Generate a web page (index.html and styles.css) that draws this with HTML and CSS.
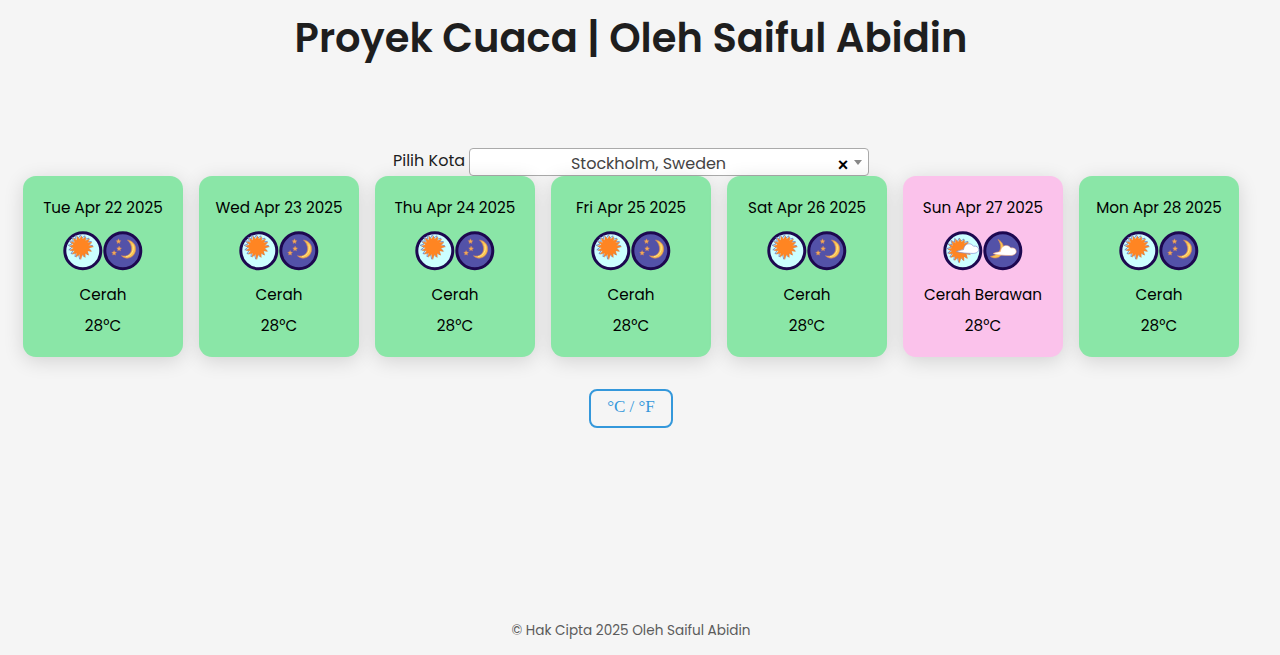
FILE: index.html
```html
<!DOCTYPE html>
<html lang="id">
<head>
<meta charset="utf-8">
<title>Proyek Cuaca</title>
<link rel="stylesheet" href="styles.css">
</head>
<body>
<svg class="sprite" aria-hidden="true">
  <defs>
    <path id="rays" d="M13 .2 7.9 1.6 11 5 6.7 4.4 8 9 4.4 6.7 4.4 11.3 1.6 8-.2 13.4-1.7 8-5 11-4.6 6.6-9 8-6.7 4.2-11.2 4-7.8 1.4-11.8-.5-7.9-1.8-10.8-5-6.6-4.4-8-8.6-4.4-6.6-4.2-10.6-1.4-7.8.4-11 1.8-7.8 5-10 4.6-6.4 9-7.6 6.8-4.2 11.4-4.2 7.9-1.5Z"/>
    <path id="cloud" d="M0 8.6C2.4 7.2 4.5 7.2 7 6.6 7.6 2.6 10 .6 13 .8 14.8.9 16 2 17 3.2 20 2.6 22.2 4.2 22.2 6.6 22 9.4 19 10.6 15.5 10.4 10 10.3 5 10 0 8.6Z"/>
    <path id="star" d="M0-2.4.8-.8 2.5-.5 1.2.8 1.4 2.4 0 1.6-1.5 2.3-1.2.7-2.4-.5-.8-.8Z"/>
  </defs>
  <symbol id="day" viewBox="0 0 40 40">
    <circle class="sky" cx="19.8" cy="19.8" r="18"/>
    <use class="ray-line" href="#rays" x="17" y="14.8"/>
    <use class="sun" href="#rays" transform="translate(18 15.6) scale(.96)"/>
  </symbol>
  <symbol id="night" viewBox="0 0 40 40">
    <circle class="dark" cx="19.8" cy="19.8" r="18"/>
    <path class="moon" d="M24.5 9C30.5 10 33.8 15 32.3 20.5 30.5 27.5 22.5 29 18.5 24.8 24 26 27.8 23.5 28.5 19 29 15 27.3 11.5 24.5 9Z"/>
    <path class="glow" d="M29.8 13.5C31.7 19 28.5 24.6 23 25.7"/>
    <use class="star" href="#star" x="15.5" y="10.2"/>
    <use class="star" href="#star" x="16.1" y="17.5"/>
    <use class="star" href="#star" x="11.1" y="21.8"/>
  </symbol>
  <symbol id="day-cloud" viewBox="0 0 40 40">
    <circle class="sky" cx="19.8" cy="19.8" r="18"/>
    <use class="ray-line" href="#rays" x="15.9" y="18"/>
    <use class="sun" href="#rays" transform="translate(16.6 18.7) scale(.98)"/>
    <use class="cloud tint" href="#cloud" x="13.5" y="12"/>
  </symbol>
  <symbol id="night-cloud" viewBox="0 0 40 40">
    <circle class="dark" cx="19.8" cy="19.8" r="18"/>
    <path class="moon" d="M15 8.5C20 11 22 16 19.5 22 17 27.5 11.5 28.2 7.5 25.5 13 24.5 17 21.5 17.5 17 17.8 13.5 16.8 11 15 8.5Z"/>
    <use class="cloud" href="#cloud" transform="translate(10 13.6) scale(1.05)"/>
  </symbol>
</svg>
<div class="page">
  <h1 class="title">Proyek Cuaca | Oleh Saiful Abidin</h1>
  <div class="picker">
    <label class="label">Pilih Kota</label>
    <div class="select"><span class="city">Stockholm, Sweden</span><span class="clear">×</span><span class="arrow"></span></div>
  </div>
  <main class="cards">
    <section class="card"><p class="date">Tue Apr 22 2025</p><div class="icons"><svg><use href="#day"/></svg><svg><use href="#night"/></svg></div><p class="state">Cerah</p><p class="temp">28°C</p></section>
    <section class="card"><p class="date">Wed Apr 23 2025</p><div class="icons"><svg><use href="#day"/></svg><svg><use href="#night"/></svg></div><p class="state">Cerah</p><p class="temp">28°C</p></section>
    <section class="card"><p class="date">Thu Apr 24 2025</p><div class="icons"><svg><use href="#day"/></svg><svg><use href="#night"/></svg></div><p class="state">Cerah</p><p class="temp">28°C</p></section>
    <section class="card"><p class="date">Fri Apr 25 2025</p><div class="icons"><svg><use href="#day"/></svg><svg><use href="#night"/></svg></div><p class="state">Cerah</p><p class="temp">28°C</p></section>
    <section class="card"><p class="date">Sat Apr 26 2025</p><div class="icons"><svg><use href="#day"/></svg><svg><use href="#night"/></svg></div><p class="state">Cerah</p><p class="temp">28°C</p></section>
    <section class="card cloudy"><p class="date">Sun Apr 27 2025</p><div class="icons"><svg><use href="#day-cloud"/></svg><svg><use href="#night-cloud"/></svg></div><p class="state">Cerah Berawan</p><p class="temp">28°C</p></section>
    <section class="card"><p class="date">Mon Apr 28 2025</p><div class="icons"><svg><use href="#day"/></svg><svg><use href="#night"/></svg></div><p class="state">Cerah</p><p class="temp">28°C</p></section>
  </main>
  <button class="unit">°C / °F</button>
  <footer class="footer">© Hak Cipta 2025 Oleh Saiful Abidin</footer>
</div>
</body>
</html>
```
FILE: styles.css
```css
* { box-sizing: border-box; }
body {
  margin: 0;
  background: #f5f5f5;
  color: #1e1e1e;
  font-family: Poppins, Inter, sans-serif;
  font-size: 16px;
}
.sprite { display: block; width: 0; height: 0; }
.page {
  display: flex;
  flex-direction: column;
  align-items: center;
  width: 1262px;
  height: 655px;
}
.title {
  margin: 8px 0 0;
  height: 140px;
  font-size: 40px;
  font-weight: 600;
  line-height: 60px;
  white-space: nowrap;
}
.picker { display: flex; gap: 4px; height: 28px; }
.label { line-height: 25px; white-space: nowrap; }
.select {
  display: flex;
  align-items: center;
  width: 400px;
  height: 28px;
  padding: 2px 6px 0 8px;
  border: 1px solid #aaa;
  border-radius: 4px;
  background: #fff;
  color: #444;
}
.city { flex: 1; padding-right: 19px; text-align: center; }
.clear {
  display: flex;
  justify-content: center;
  width: 10px;
  padding-top: 4px;
  margin-right: 2px;
  color: #000;
  font-family: "Liberation Sans", sans-serif;
  font-size: 18px;
  font-weight: 700;
  line-height: 20px;
}
.arrow {
  margin: -2px 0 0 4px;
  border: 4px solid transparent;
  border-top: 5px solid #888;
  border-bottom: 0;
}
.cards { position: relative; display: flex; gap: 16px; }
.card {
  width: 160px;
  height: 181px;
  padding-top: 20px;
  border-radius: 13px;
  background: #8ae6a7;
  box-shadow: 0 4px 20px rgba(0, 0, 0, .14);
  color: #000;
  font-size: 15.2px;
  text-align: center;
}
.cloudy { background: #fbc2eb; }
.card p { margin: 0; line-height: 23px; white-space: nowrap; }
.icons { display: flex; justify-content: center; height: 40px; margin: 12px 0; }
.icons svg { width: 40px; height: 40px; }
.card .temp { margin-top: 8px; }
.sky { fill: #cff; stroke: #1d0850; stroke-width: 3; }
.dark { fill: #5352a8; stroke: #1d0850; stroke-width: 3; }
.ray-line { fill: none; stroke: #6f7fc0; stroke-width: .8; }
.sun { fill: #ff8522; stroke: #f08030; stroke-width: .4; }
.moon { fill: #fbc54f; stroke: #cf8263; stroke-width: .7; }
.glow { fill: none; stroke: #fff0a0; stroke-width: .7; }
.star { fill: #f4ac55; stroke: #c37a65; stroke-width: .4; }
.cloud { fill: #fff; stroke: #f0a070; stroke-width: .5; }
.tint { stroke: #7f8fd0; stroke-width: .7; }
.unit {
  width: 84px;
  height: 39px;
  margin-top: 32px;
  padding: 0 0 3px;
  border: 2px solid #3498db;
  border-radius: 8px;
  background: transparent;
  color: #3498db;
  font-family: "Liberation Serif", serif;
  font-size: 17px;
}
.footer { margin: auto 0 13px; color: #5c5c5c; font-size: 13.6px; line-height: 22px; }
```
